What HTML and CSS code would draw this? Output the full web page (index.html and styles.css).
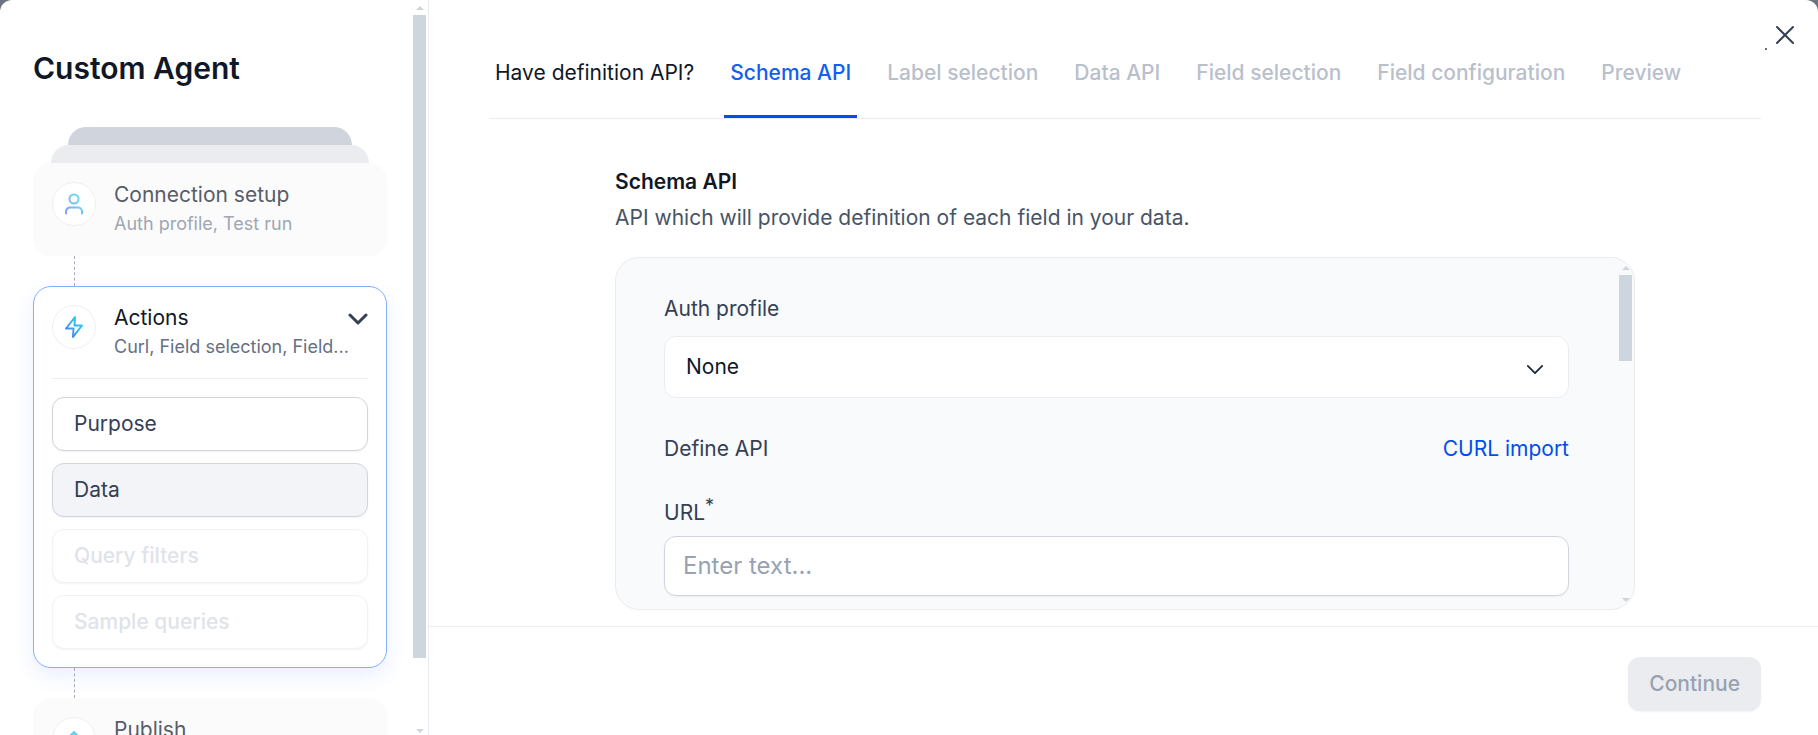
FILE: index.html
```html
<!DOCTYPE html>
<html lang="en">
<head>
<meta charset="utf-8">
<meta name="viewport" content="width=device-width, initial-scale=1">
<title>Custom Agent</title>
<link rel="stylesheet" href="styles.css">
</head>
<body>
<svg class="defs" aria-hidden="true">
  <defs>
    <linearGradient id="accent" x1="0" y1="24" x2="24" y2="0" gradientUnits="userSpaceOnUse">
      <stop offset="0.2" stop-color="#4f7dfb"/>
      <stop offset="0.7" stop-color="#2cc8ec"/>
    </linearGradient>
  </defs>
</svg>
<div class="dialog" role="dialog" aria-label="Custom Agent">
  <aside class="sidebar">
    <div class="sidebar-body">
      <h1 class="title">Custom Agent</h1>
      <div class="steps">
        <div class="stack stack-far"></div>
        <div class="stack stack-near"></div>
        <section class="card card-muted">
          <div class="card-head">
            <span class="badge"><svg class="icon" viewBox="0 0 24 24"><path d="M4 21.500v-2a4 4 0 0 1 4-4h8a4 4 0 0 1 4 4v2"/><circle cx="12" cy="7" r="4.500"/></svg></span>
            <div class="card-text">
              <h2 class="card-title">Connection setup</h2>
              <p class="card-sub">Auth profile, Test run</p>
            </div>
          </div>
        </section>
        <div class="connector"></div>
        <section class="card card-active">
          <div class="card-head">
            <span class="badge"><svg class="icon" viewBox="0 0 24 24"><path d="M13 2 4 13.500h7.500L11 22l9-11.500h-7.500z"/></svg></span>
            <div class="card-text">
              <h2 class="card-title">Actions</h2>
              <p class="card-sub">Curl, Field selection, Field...</p>
            </div>
            <button class="toggle" type="button" aria-label="Collapse"><svg viewBox="0 0 20 12"><path d="M2 2l8 8 8-8"/></svg></button>
          </div>
          <div class="items">
            <button class="item" type="button">Purpose</button>
            <button class="item item-current" type="button">Data</button>
            <button class="item" type="button" disabled>Query filters</button>
            <button class="item" type="button" disabled>Sample queries</button>
          </div>
        </section>
        <div class="connector"></div>
        <section class="card card-muted">
          <div class="card-head">
            <span class="badge"><svg class="icon" viewBox="0 0 24 24"><path d="M7 10l5-5 5 5M12 6v10M4 16v5h16v-5"/></svg></span>
            <div class="card-text">
              <h2 class="card-title">Publish</h2>
            </div>
          </div>
        </section>
      </div>
    </div>
    <div class="scrollbar" aria-hidden="true">
      <span class="arrow arrow-up"></span>
      <span class="track"><span class="thumb thumb-side"></span></span>
      <span class="arrow arrow-down arrow-end"></span>
    </div>
  </aside>
  <main class="main">
    <button class="close" type="button" aria-label="Close"><svg viewBox="0 0 20 20"><path d="M2 2l16 16M18 2L2 18"/></svg></button>
    <span class="dot"></span>
    <nav class="tabs">
      <button class="tab" type="button">Have definition API?</button>
      <button class="tab tab-current" type="button">Schema API</button>
      <button class="tab" type="button" disabled>Label selection</button>
      <button class="tab" type="button" disabled>Data API</button>
      <button class="tab" type="button" disabled>Field selection</button>
      <button class="tab" type="button" disabled>Field configuration</button>
      <button class="tab" type="button" disabled>Preview</button>
    </nav>
    <div class="content">
      <div class="column">
        <h2 class="heading">Schema API</h2>
        <p class="lead">API which will provide definition of each field in your data.</p>
        <div class="panel">
          <form class="form">
            <label class="label" for="auth">Auth profile</label>
            <div class="select-wrap">
              <select class="select" id="auth"><option>None</option></select>
              <svg class="select-arrow" viewBox="0 0 20 12"><path d="M2 2l8 8 8-8"/></svg>
            </div>
            <div class="row">
              <span class="label">Define API</span>
              <a class="link" href="#">CURL import</a>
            </div>
            <label class="label" for="url">URL<sup class="req">*</sup></label>
            <input class="input" id="url" type="text" placeholder="Enter text...">
          </form>
          <div class="scrollbar scrollbar-panel" aria-hidden="true">
            <span class="arrow arrow-up"></span>
            <span class="track"><span class="thumb thumb-panel"></span></span>
            <span class="arrow arrow-down"></span>
          </div>
        </div>
      </div>
    </div>
    <footer class="footer">
      <button class="continue" type="button" disabled>Continue</button>
    </footer>
  </main>
</div>
</body>
</html>
```
FILE: styles.css
```css
* { box-sizing: border-box; }
body {
  margin: 0;
  background: #6b7280;
  color: #101828;
  font-family: Inter, "Liberation Sans", sans-serif;
  font-size: 21px;
  line-height: 28px;
}
h1, h2, p { margin: 0; font-weight: 400; }
button, input, select { font: inherit; color: inherit; margin: 0; }
svg { display: block; fill: none; stroke: currentColor; stroke-linecap: round; stroke-linejoin: round; }
.defs { position: absolute; width: 0; height: 0; }

.dialog {
  display: flex;
  height: 100vh;
  overflow: hidden;
  background: #fff;
  border-radius: 12px 12px 0 0;
}

.sidebar {
  display: flex;
  flex: none;
  border-right: 1px solid #eaecf0;
}
.sidebar-body {
  width: 413px;
  padding: 50px 26px 0 33px;
  overflow: hidden;
}
.title { font-size: 30px; line-height: 37px; font-weight: 600; }
.steps { margin-top: 40px; }
.stack { height: 18px; border-radius: 18px 18px 0 0; }
.stack-far { margin: 0 35px; background: #d0d5dd; }
.stack-near { margin: 0 18px; background: #eaecf0; }
.card { border: 1px solid transparent; border-radius: 18px; padding: 18px; }
.card-muted { background: #fbfbfb; padding-bottom: 15px; }
.card-muted .card-title { color: #575d69; }
.card-muted .card-sub { color: #a0a6b2; }
.card-muted .icon { opacity: .7; }
.card-active {
  border-color: #84adff;
  background: #fff;
  box-shadow: 0 8px 20px rgba(41, 112, 255, .1);
}
.card-head { display: flex; align-items: flex-start; }
.badge {
  display: grid;
  place-items: center;
  flex: none;
  width: 44px;
  height: 44px;
  margin-right: 18px;
  border: 1px solid #efeff1;
  border-radius: 50%;
  background: #fff;
}
.icon { width: 24px; height: 24px; stroke: url(#accent); stroke-width: 2; }
.card-text { flex: 1; min-width: 0; }
.card-title { font-size: 21px; line-height: 26px; }
.card-sub {
  color: #667085;
  font-size: 18px;
  line-height: 32px;
  white-space: nowrap;
}
.toggle { padding: 8px 0; border: 0; background: none; color: #344054; }
.toggle svg { width: 20px; height: 12px; stroke-width: 3; }
.connector { height: 30px; margin-left: 41px; border-left: 1px dashed #a5a8ba; }
.items {
  display: flex;
  flex-direction: column;
  gap: 12px;
  margin-top: 15px;
  padding-top: 18px;
  border-top: 1px solid #eaecf0;
}
.item {
  height: 54px;
  padding: 0 21px;
  border: 1px solid #d0d5dd;
  border-radius: 12px;
  background: #fff;
  color: #344054;
  text-align: left;
  box-shadow: 0 1px 2px rgba(16, 24, 40, .05);
}
.item-current { background: #f2f4f7; }
.item:disabled { border-color: #f2f2f4; color: #e0e3e9; font-weight: 500; }

.scrollbar { display: flex; flex-direction: column; flex: none; width: 15px; padding-right: 2px; }
.scrollbar-panel { padding: 2px 2px 2px 0; }
.track { flex: 1; }
.thumb { display: block; background: #cdd5df; }
.thumb-side { height: 90.3%; }
.thumb-panel { height: 27%; }
.arrow { height: 15px; display: grid; place-items: center; }
.arrow::before { content: ""; border: 4px solid transparent; }
.arrow-up::before { border-top: 0; border-bottom-color: #cdd5df; }
.arrow-down::before { border-bottom: 0; border-top-color: #cdd5df; }
.arrow-end { height: 8px; }

.main { position: relative; display: flex; flex: 1; flex-direction: column; min-width: 0; }
.close {
  position: absolute;
  top: 25px;
  right: 23px;
  padding: 0;
  border: 0;
  background: none;
  color: #344054;
}
.close svg { width: 20px; height: 20px; stroke-width: 2; }
.dot { position: absolute; top: 48px; right: 51px; width: 2px; height: 2px; background: #667085; }
.tabs {
  display: flex;
  gap: 24px;
  margin: 0 57px 0 60px;
  padding-top: 59px;
  border-bottom: 1px solid #eaecf0;
}
.tab {
  padding: 0 6px 28px;
  border: 0;
  border-bottom: 3px solid transparent;
  background: none;
  white-space: nowrap;
}
.tab-current { border-color: #004eeb; color: #155eef; font-weight: 500; }
.tab:disabled { color: #b9c0cc; font-weight: 500; }

.content {
  display: flex;
  flex: 1;
  justify-content: center;
  min-height: 0;
  padding: 49px 57px 16px 60px;
}
.column {
  display: flex;
  flex: 1;
  flex-direction: column;
  min-width: 0;
  max-width: 1020px;
}
.heading { font-size: 21px; font-weight: 600; }
.lead { margin-top: 8px; color: #475467; }
.panel {
  display: flex;
  flex: 1;
  min-height: 0;
  margin-top: 25px;
  overflow: hidden;
  border: 1px solid #eaecf0;
  border-radius: 24px;
  background: #f9fafc;
}
.form { flex: 1; min-width: 0; padding: 37px 50px 0 48px; color: #344054; }
.label { display: block; }
.select-wrap { position: relative; margin: 13px 0 37px; }
.select {
  display: block;
  appearance: none;
  width: 100%;
  height: 62px;
  padding: 0 21px;
  border: 1px solid #eaecf0;
  border-radius: 12px;
  background: #fff;
  color: #101828;
}
.select-arrow { position: absolute; top: 28px; right: 25px; width: 18px; height: 11px; color: #1d2939; stroke-width: 2; }
.row { display: flex; justify-content: space-between; margin-bottom: 36px; }
.link { color: #004eeb; text-decoration: none; }
.req { font-size: 18px; line-height: 0; }
.input {
  width: 100%;
  height: 60px;
  margin-top: 9px;
  padding: 0 18px 2px;
  border: 1px solid #d0d5dd;
  border-radius: 12px;
  background: #fff;
  font-size: 24px;
  box-shadow: 0 1px 2px rgba(16, 24, 40, .05);
}
.input::placeholder { color: #98a2b3; }
.footer {
  display: flex;
  justify-content: flex-end;
  padding: 30px 57px 24px;
  border-top: 1px solid #eaecf0;
}
.continue {
  height: 54px;
  padding: 0 21px;
  border: 0;
  border-radius: 12px;
  background: #eaecf0;
  color: #98a2b3;
  font-weight: 500;
  box-shadow: 0 1px 2px rgba(16, 24, 40, .05);
}
```
